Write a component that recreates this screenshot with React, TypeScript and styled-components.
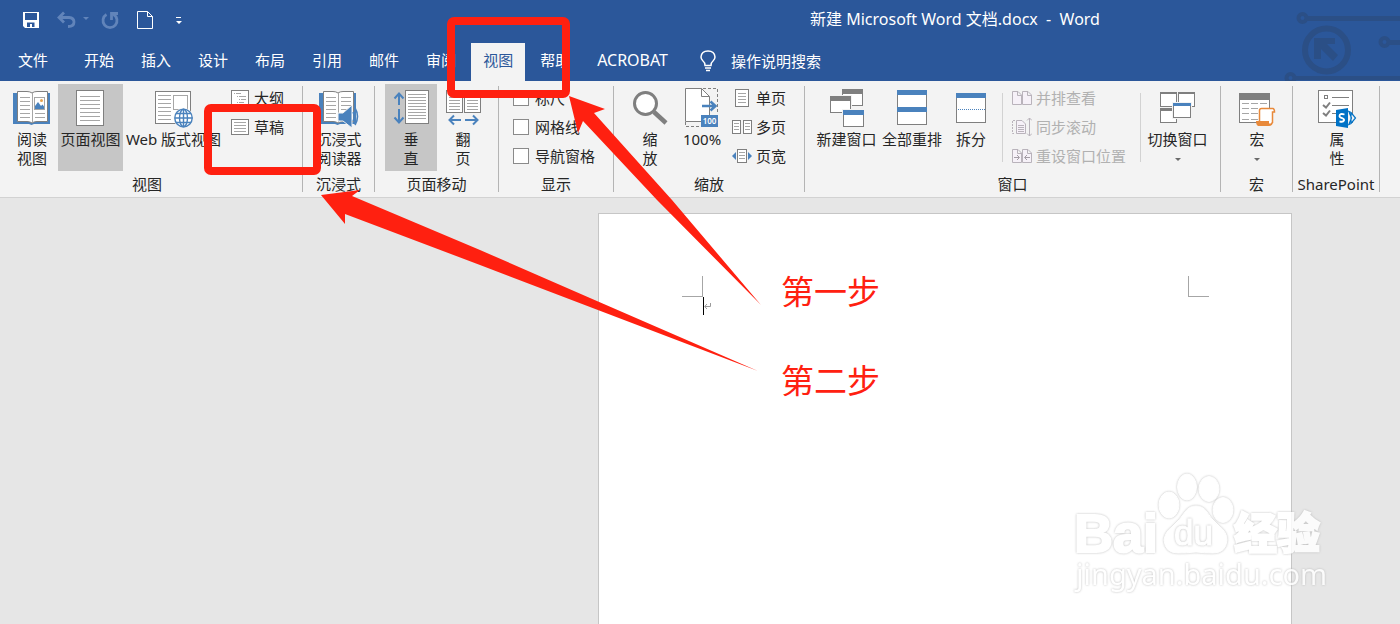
import React from 'react';
import styled, { createGlobalStyle } from 'styled-components';

const GlobalStyle = createGlobalStyle`
  * { box-sizing: border-box; }
  body {
    margin: 0;
    background: #e6e6e6;
    font-family: 'Noto Sans', 'Noto Sans CJK SC', sans-serif;
    font-size: 15px;
    color: #262626;
  }
  button {
    font: inherit;
    color: inherit;
    background: none;
    border: 0;
    padding: 0;
    white-space: nowrap;
  }
`;

const GREY = '#7f7f7f';
const BLUE = '#4a82bd';
const LINE = '#a6a6a6';
const RED = '#ff2010';

/* ---------- layout ---------- */

const Window = styled.div`
  position: relative;
  display: flex;
  flex-direction: column;
  min-height: 100vh;
  overflow: hidden;
`;

const Header = styled.header`
  position: relative;
  height: 81px;
  background: #2b579a;
  color: #fff;
`;

const Circuit = styled.svg`
  position: absolute;
  right: 0;
  top: 0;
`;

const TitleBar = styled.div`
  display: flex;
  align-items: center;
  height: 38px;
`;

const QuickAccess = styled.div`
  display: flex;
  align-items: center;
  flex: 0 0 510px;
  height: 38px;
  padding: 2px 0 0 22px;
`;

const QuickButton = styled.button<{ $gap: number }>`
  display: flex;
  margin-right: ${(p) => p.$gap}px;
`;

const Title = styled.div`
  flex: 1;
  padding-bottom: 3px;
  font-size: 16px;
  text-align: center;
  white-space: pre;
`;

const TabBar = styled.nav`
  display: flex;
  height: 43px;
  padding: 5px 0 0 6px;
`;

const Tab = styled.button<{ $active?: boolean; $after?: number; $latin?: boolean }>`
  height: 38px;
  padding: 0 12px 5px;
  font-size: ${(p) => (p.$latin ? 16 : 15)}px;
  margin-right: ${(p) => p.$after ?? 3}px;
  background: ${(p) => (p.$active ? '#f3f3f3' : 'transparent')};
  color: ${(p) => (p.$active ? '#2b579a' : '#fff')};
`;

const TellMe = styled.button`
  display: flex;
  align-items: center;
  gap: 15px;
  height: 38px;
  padding: 0 0 3px 17px;
`;

const Ribbon = styled.section`
  display: flex;
  height: 117px;
  background: #f3f3f3;
  border-bottom: 1px solid #d2d2d2;
`;

const Separator = styled.div`
  flex: none;
  width: 1px;
  margin: 5px 0;
  background: #b4b4b4;
`;

const InnerSeparator = styled.div<{ $left: number }>`
  flex: none;
  width: 1px;
  height: 69px;
  margin: 9px 4px 0 ${(p) => p.$left}px;
  background: #d2d2d2;
`;

const GroupBox = styled.div<{ $width: number; $right?: number }>`
  flex: none;
  width: ${(p) => p.$width}px;
  padding: 3px ${(p) => p.$right ?? 0}px 0 0;
`;

const GroupBody = styled.div<{ $left: number }>`
  display: flex;
  height: 87px;
  padding-left: ${(p) => p.$left}px;
`;

const GroupLabel = styled.div`
  height: 26px;
  line-height: 27px;
  text-align: center;
  white-space: nowrap;
`;

const BigButton = styled.button<{ $width: number; $active?: boolean }>`
  display: flex;
  flex-direction: column;
  align-items: center;
  flex: none;
  width: ${(p) => p.$width}px;
  height: 87px;
  padding-top: 4px;
  line-height: 19px;
  background: ${(p) => (p.$active ? '#c6c6c6' : 'transparent')};
`;

const BigLabel = styled.span`
  height: 38px;
  margin-top: 2px;
  white-space: pre;
`;

const Caret = styled.span`
  margin: 9px auto 0;
  display: block;
  width: 0;
  border: 3px solid transparent;
  border-top-color: #6a6a6a;
`;

const SmallColumn = styled.div<{ $left: number }>`
  display: flex;
  flex-direction: column;
  flex: none;
  padding-left: ${(p) => p.$left}px;
`;

const SmallButton = styled.button`
  display: flex;
  align-items: center;
  gap: 4px;
  height: 29px;
  line-height: 28px;
  padding-bottom: 1px;
  &:disabled { color: #b1b1b1; }
`;

const CheckLabel = styled.label`
  display: flex;
  align-items: center;
  gap: 6px;
  height: 29px;
  line-height: 28px;
  padding-bottom: 1px;
  white-space: nowrap;
`;

const CheckBox = styled.input`
  appearance: none;
  width: 16px;
  height: 16px;
  margin: 0;
  border: 1px solid #8a8a8a;
  background: #fff;
`;

const Workspace = styled.main`
  position: relative;
  display: flex;
  flex: 1;
  padding: 15px 108px 0 598px;
`;

const Paper = styled.article`
  flex: 1;
  padding: 62px 82px 0 83px;
  background: #fff;
  border: 1px solid #c6c6c6;
  border-bottom: 0;
`;

const Marks = styled.div`
  display: flex;
  justify-content: space-between;
`;

const CornerMark = styled.div<{ $side: 'left' | 'right' }>`
  width: 21px;
  height: 21px;
  border-bottom: 1px solid #a6a6a6;
  border-${(p) => (p.$side === 'left' ? 'right' : 'left')}: 1px solid #a6a6a6;
`;

const Paragraph = styled.div`
  display: flex;
  align-items: center;
  height: 18px;
  margin-left: 21px;
`;

const TextCursor = styled.span`
  width: 1px;
  height: 18px;
  background: #000;
`;

const Watermark = styled.svg`
  position: absolute;
  right: 70px;
  bottom: 24px;
  pointer-events: none;
`;

const Halo = styled.g`
  filter: drop-shadow(0 0 1px #b4b4b4);
`;

const Annotations = styled.svg`
  position: absolute;
  left: 0;
  top: 0;
  pointer-events: none;
`;

const StepNote = styled.div<{ $top: number }>`
  position: absolute;
  left: 781px;
  top: ${(p) => p.$top}px;
  font-size: 33px;
  line-height: 40px;
  color: ${RED};
`;

/* ---------- icon helpers ---------- */

const Svg = ({ w, h = 40, children }: { w: number; h?: number; children: React.ReactNode }) => (
  <svg width={w} height={h} viewBox={`0 0 ${w} ${h}`} fill="none" aria-hidden="true">
    {children}
  </svg>
);

const Lines = ({ x1, x2, ys, c = LINE }: { x1: number; x2: number; ys: number[]; c?: string }) => (
  <path d={ys.map((y) => `M${x1} ${y + 0.5}H${x2}`).join('')} stroke={c} />
);

const Sheet = ({ x, y, w, h, c = GREY }: { x: number; y: number; w: number; h: number; c?: string }) => (
  <rect x={x + 0.5} y={y + 0.5} width={w - 1} height={h - 1} fill="#fff" stroke={c} />
);

const Pane = ({ x, y, w, h, bar, c = GREY }: { x: number; y: number; w: number; h: number; bar: number; c?: string }) => (
  <>
    <rect x={x - 1} y={y - 1} width={w + 2} height={h + 2} fill="#f3f3f3" />
    <Sheet x={x} y={y} w={w} h={h} />
    <rect x={x} y={y} width={w} height={bar} fill={c} />
  </>
);

const Book = () => (
  <>
    <path d="M0 5H5V32H33V5H37V36H21L18.500 37L16 36H0Z" fill={BLUE} />
    <path d="M4.500 3.500H14Q17 3.500 19 5Q21 3.500 24 3.500H34.500V33.500H24Q21 33.500 19 35Q17 33.500 14 33.500H4.500Z" fill="#fff" stroke={GREY} />
    <path d="M19.500 5V34" stroke={LINE} />
    <Lines x1={7} x2={17} ys={[9, 13, 17, 21, 25, 29]} />
  </>
);

/* ---------- ribbon icons ---------- */

const ReadIcon = () => (
  <Svg w={38}>
    <Book />
    <rect x="21.500" y="9.500" width="10" height="12" fill="#fff" stroke={LINE} />
    <path d="M22 21V18L25 14L28 18L29.500 16.500L31 18.500V21Z" fill={BLUE} />
    <circle cx="28.500" cy="12.500" r="1.500" fill="#e8a24c" />
    <Lines x1={22} x2={32} ys={[25, 29]} />
  </Svg>
);

const PageIcon = () => (
  <Svg w={29}>
    <Sheet x={0} y={2} w={28} h={36} />
    <Lines x1={4} x2={24} ys={[8, 12, 16, 20, 24, 28, 32]} />
  </Svg>
);

const WebIcon = () => (
  <Svg w={38}>
    <Sheet x={0} y={3} w={36} h={33} />
    <Lines x1={3} x2={16} ys={[7, 11, 15, 19, 23, 27, 31]} />
    <Sheet x={18} y={7} w={15} h={15} c={LINE} />
    <circle cx="28.500" cy="30" r="10" fill="#f3f3f3" />
    <g stroke={BLUE} strokeWidth="1.400">
      <circle cx="28.500" cy="30" r="8.700" fill="#fff" />
      <ellipse cx="28.500" cy="30" rx="4" ry="8.700" />
      <path d="M20 30H37.500M28.500 21V39M21 25.500H36M21 34.500H36" />
    </g>
  </Svg>
);

const ImmersiveIcon = () => (
  <Svg w={40}>
    <Book />
    <Lines x1={22} x2={32} ys={[9, 13, 17, 21]} />
    <path d="M19 25H24L33 17V40L24 33H19Z" fill={BLUE} stroke="#f3f3f3" />
    <path d="M34 24Q36.500 28.500 34 33M36 20Q41 28.500 36 37" stroke={BLUE} strokeWidth="1.600" />
  </Svg>
);

const VerticalIcon = () => (
  <Svg w={37}>
    <path d="M6 17V6M1.500 10.500L6 5.500L10.500 10.500M6 21V34M1.500 29.500L6 34.500L10.500 29.500" stroke={BLUE} strokeWidth="2" />
    <Sheet x={12} y={2} w={24} h={34} />
    <Lines x1={15} x2={33} ys={[6, 9, 12, 15, 18, 21, 24, 27, 30]} />
  </Svg>
);

const FlipIcon = () => (
  <Svg w={35}>
    <Sheet x={0} y={2} w={17} h={23} />
    <Sheet x={18} y={2} w={17} h={23} />
    <Lines x1={3} x2={14} ys={[6, 9, 12, 15, 18, 21]} />
    <Lines x1={21} x2={32} ys={[6, 9, 12, 15, 18, 21]} />
    <path d="M15 32H4M8 27.500L3.500 32L8 36.500M19 32H31M27 27.500L31.500 32L27 36.500" stroke={BLUE} strokeWidth="2" />
  </Svg>
);

const ZoomIcon = () => (
  <Svg w={36}>
    <path d="M22 24L34 35" stroke={GREY} strokeWidth="4.500" />
    <circle cx="13.500" cy="15.500" r="11" fill="#fff" stroke={GREY} strokeWidth="3" />
  </Svg>
);

const HundredIcon = () => (
  <Svg w={34}>
    <path d="M18 .5H32.500V26M.5 34V38.500H16" stroke={GREY} strokeDasharray="3 2" />
    <path d="M.5 .5H16.500L24.500 8.500V33.500H.5Z" fill="#fff" stroke={GREY} />
    <path d="M16.500 .5V8.500H24.500" stroke={GREY} />
    <path d="M17 18H30M25.500 13.500L30.500 18L25.500 22.500" stroke={BLUE} strokeWidth="2.500" />
    <rect x="16" y="27" width="17" height="12" fill={BLUE} />
    <text x="24.500" y="36" textAnchor="middle" fontSize="8" fontWeight="600" fill="#fff">100</text>
  </Svg>
);

const NewWindowIcon = () => (
  <Svg w={34}>
    <Pane x={12} y={1} w={21} h={17} bar={5} />
    <Pane x={0} y={8} w={21} h={17} bar={5} />
    <Pane x={13} y={22} w={21} h={17} bar={5} c={BLUE} />
  </Svg>
);

const ArrangeIcon = () => (
  <Svg w={30}>
    <Sheet x={0} y={2} w={30} h={35} />
    <path d="M0 2H30V7H0ZM0 19H30V24H0Z" fill={BLUE} />
  </Svg>
);

const SplitIcon = () => (
  <Svg w={30}>
    <Sheet x={0} y={5} w={30} h={30} />
    <path d="M0 5H30V10H0Z" fill={BLUE} />
    <path d="M2 21.500H29" stroke={BLUE} strokeDasharray="1 1" />
  </Svg>
);

const SwitchIcon = () => (
  <Svg w={35}>
    <Pane x={0} y={4} w={17} h={15} bar={2} />
    <Pane x={18} y={4} w={17} h={15} bar={2} />
    <Pane x={0} y={20} w={17} h={15} bar={3} />
    <Pane x={13} y={15} w={18} h={15} bar={3} c={BLUE} />
  </Svg>
);

const MacroIcon = () => (
  <Svg w={37}>
    <Sheet x={0} y={5} w={31} h={30} />
    <rect y="5" width="31" height="7" fill={GREY} />
    <path d="M3 15.500H28M3 20.500H28M3 25.500H28M3 31.500H28" stroke={LINE} strokeDasharray="7 2" />
    <path d="M21 21H34V33L31 38H18V33H21Z" fill="#fff" />
    <path d="M20.500 33V22.500Q20.500 20.500 22.500 20.500H34Q35.500 21 35.500 24H33.500V35" fill="#fff" stroke="#e8893a" strokeWidth="1.500" />
    <path d="M17 33H30V35Q31 37 33 34L34 35Q33 38 30 38H19Q17 37 17 33Z" fill="#e8893a" />
  </Svg>
);

const PropertiesIcon = () => (
  <Svg w={39}>
    <Sheet x={0} y={2} w={35} h={33} />
    <rect x="6.500" y="7.500" width="3" height="3" stroke={GREY} />
    <path d="M14 9.500H31M14 17.500H31M14 25.500H18" stroke={GREY} />
    <path d="M5 17L8 19.500L12 14.500M5 25L8 27.500L12 22.500" stroke={GREY} strokeWidth="2" />
    <path d="M29 21L38 30L29 39Z" fill="#f3f3f3" />
    <path d="M30 23L33 24.500L37.500 30L33 35.500L30 37M31 24L33.500 30L31 36M33 25V35" stroke="#0072c6" strokeWidth="1.200" />
    <path d="M18 22L30 20V40L18 38Z" fill="#0072c6" />
    <path d="M26.500 26.500Q21.500 25 21.500 28Q21.500 29.500 24 30Q26.500 31 26 32.500Q25 34.500 21.500 33.300" stroke="#fff" strokeWidth="1.800" />
  </Svg>
);

const OutlineIcon = () => (
  <Svg w={19} h={18}>
    <Sheet x={0} y={1} w={18} h={16} />
    <path d="M3 4.500H4M5 4.500H10M6 7.500H7M8 7.500H15M8 10.500H9M10 10.500H15M6 13.500H7M8 13.500H13" stroke={LINE} />
  </Svg>
);

const DraftIcon = () => (
  <Svg w={19} h={18}>
    <Sheet x={0} y={1} w={18} h={16} />
    <Lines x1={3} x2={15} ys={[4, 7, 10, 13]} />
  </Svg>
);

const OnePageIcon = () => (
  <Svg w={20} h={20}>
    <Sheet x={3} y={1} w={14} h={18} />
    <Lines x1={6} x2={14} ys={[5, 8, 11, 14]} />
  </Svg>
);

const MultiPageIcon = () => (
  <Svg w={20} h={20}>
    <Sheet x={0} y={3} w={9} h={14} />
    <Sheet x={11} y={3} w={9} h={14} />
    <Lines x1={2} x2={7} ys={[6, 9, 12]} />
    <Lines x1={13} x2={18} ys={[6, 9, 12]} />
  </Svg>
);

const PageWidthIcon = () => (
  <Svg w={20} h={20}>
    <Sheet x={5} y={3} w={10} h={14} />
    <Lines x1={7} x2={13} ys={[6, 9, 12]} />
    <path d="M4 6V14L0 10ZM16 6V14L20 10Z" fill={BLUE} />
  </Svg>
);

const PALE = '#b9b3bb';
const foldPage = (x: number) => `M${x + 0.5} 3.500H${x + 6}L${x + 9.5} 7V16.500H${x + 0.5}ZM${x + 5.5} 3.500V7.500H${x + 9}`;

const SideBySideIcon = () => (
  <Svg w={20} h={20}>
    <path d={foldPage(0) + foldPage(10)} fill="#f6f1f8" stroke={PALE} />
  </Svg>
);

const SyncIcon = () => (
  <Svg w={20} h={20}>
    <path d="M3 3.500H.5V16.500H3" stroke={PALE} strokeDasharray="2 1" />
    <path d="M4.500 3.500H10L13.500 7V16.500H4.500Z" fill="#f6f1f8" stroke={PALE} />
    <Lines x1={6} x2={12} ys={[8, 10, 12, 14]} c={PALE} />
    <path d="M17.500 1V19M15 3.500L17.500 1L20 3.500M15 16.500L17.500 19L20 16.500" stroke={PALE} />
  </Svg>
);

const ResetIcon = () => (
  <Svg w={20} h={20}>
    <path d={foldPage(0) + foldPage(10)} fill="#f6f1f8" stroke={PALE} />
    <path d="M2 11.500H7M5 9L7.500 11.500L5 14M18 11.500H13M15 9L12.500 11.500L15 14" stroke="#a49da6" />
  </Svg>
);

/* ---------- title bar icons ---------- */

const DIM = '#6184ba';

const SaveIcon = () => (
  <Svg w={18} h={18}>
    <path d="M1 1H17V17H3L1 15ZM3 2V9H15V2ZM5 11.500V16H8V13H10V16H12.500V11.500Z" fill="#fff" fillRule="evenodd" />
  </Svg>
);

const UndoIcon = () => (
  <Svg w={32} h={18}>
    <path d="M7 1.500L2 6.500L7 11.500M2.500 6.500H12Q17 7 17 11Q17 15.500 11 15.500" stroke={DIM} strokeWidth="2.800" />
    <path d="M26 6H32L29 9Z" fill={DIM} />
  </Svg>
);

const RedoIcon = () => (
  <Svg w={18} h={18}>
    <path d="M5.500 3.500A7 7 0 1 0 12.500 3.500M10.500 9V2.500H17" stroke={DIM} strokeWidth="2.800" />
  </Svg>
);

const NewDocIcon = () => (
  <Svg w={16} h={20}>
    <path d="M.5 1.500H10.500L15.500 6.500V18.500H.5ZM10.500 1.500V6.500H15.500" stroke="#fff" />
  </Svg>
);

const CustomizeIcon = () => (
  <Svg w={6} h={8}>
    <path d="M0 1H5V2H0ZM0 5H6L3 8Z" fill="#fff" />
  </Svg>
);

const BulbIcon = () => (
  <Svg w={16} h={22}>
    <path d="M5 15.500Q5 12.500 3 11Q1 9 1 7Q1.500 1 8 1Q14.500 1 15 7Q15 9 13 11Q11 12.500 11 15.500Z" stroke="#fff" strokeWidth="1.500" />
    <path d="M5 18H11M6 20.500H10" stroke="#fff" strokeWidth="1.500" />
  </Svg>
);

/* ---------- components ---------- */

type GroupProps = { label: string; width: number; left?: number; right?: number; children: React.ReactNode };

const Group = ({ label, width, left = 0, right, children }: GroupProps) => (
  <>
    <GroupBox $width={width} $right={right}>
      <GroupBody $left={left}>{children}</GroupBody>
      <GroupLabel>{label}</GroupLabel>
    </GroupBox>
    <Separator />
  </>
);

type BigProps = { icon: React.ReactNode; text: string; width?: number; active?: boolean; caret?: boolean };

const Big = ({ icon, text, width = 52, active, caret }: BigProps) => (
  <BigButton $width={width} $active={active}>
    {icon}
    <BigLabel>
      {text}
      {caret && <Caret />}
    </BigLabel>
  </BigButton>
);

const Small = ({ icon, text, disabled }: { icon: React.ReactNode; text: string; disabled?: boolean }) => (
  <SmallButton disabled={disabled}>
    {icon}
    {text}
  </SmallButton>
);

const Check = ({ text }: { text: string }) => (
  <CheckLabel>
    <CheckBox type="checkbox" />
    {text}
  </CheckLabel>
);

export default function App() {
  return (
    <Window>
      <GlobalStyle />
      <Header>
        <Circuit width="120" height="81" viewBox="0 0 120 81" fill="none" stroke="#2b4f86" aria-hidden="true">
          <circle cx="22.500" cy="18" r="4" strokeWidth="4" />
          <path d="M27 18.500H120" strokeWidth="5" />
          <circle cx="46.500" cy="50" r="21.500" strokeWidth="6" />
          <path d="M34 38H55V44H47L58 55L53 61L41 49V59H34Z" fill="#2b4f86" stroke="none" />
          <circle cx="104.500" cy="42" r="4" strokeWidth="4" />
          <path d="M109 42.500H120" strokeWidth="5" />
          <circle cx="10.500" cy="78" r="4" strokeWidth="4" />
          <path d="M15 78H120" strokeWidth="4" />
        </Circuit>
        <TitleBar>
          <QuickAccess>
            <QuickButton $gap={17} aria-label="保存"><SaveIcon /></QuickButton>
            <QuickButton $gap={12} aria-label="撤消"><UndoIcon /></QuickButton>
            <QuickButton $gap={18} aria-label="重复"><RedoIcon /></QuickButton>
            <QuickButton $gap={23} aria-label="新建"><NewDocIcon /></QuickButton>
            <QuickButton $gap={0} aria-label="自定义"><CustomizeIcon /></QuickButton>
          </QuickAccess>
          <Title>{'新建 Microsoft Word 文档.docx  -  Word'}</Title>
        </TitleBar>
        <TabBar>
          <Tab $after={12}>文件</Tab>
          <Tab>开始</Tab>
          <Tab>插入</Tab>
          <Tab>设计</Tab>
          <Tab>布局</Tab>
          <Tab>引用</Tab>
          <Tab>邮件</Tab>
          <Tab>审阅</Tab>
          <Tab $active>视图</Tab>
          <Tab>帮助</Tab>
          <Tab $latin>ACROBAT</Tab>
          <TellMe><BulbIcon />操作说明搜索</TellMe>
        </TabBar>
      </Header>

      <Ribbon>
        <Group label="视图" width={302} left={6} right={8}>
          <Big icon={<ReadIcon />} text={'阅读\n视图'} />
          <Big icon={<PageIcon />} text="页面视图" width={65} active />
          <Big icon={<WebIcon />} text="Web 版式视图" width={101} />
          <SmallColumn $left={7}>
            <Small icon={<OutlineIcon />} text="大纲" />
            <Small icon={<DraftIcon />} text="草稿" />
          </SmallColumn>
        </Group>
        <Group label="沉浸式" width={71} left={10}>
          <Big icon={<ImmersiveIcon />} text={'沉浸式\n阅读器'} />
        </Group>
        <Group label="页面移动" width={123} left={10}>
          <Big icon={<VerticalIcon />} text={'垂\n直'} active />
          <Big icon={<FlipIcon />} text={'翻\n页'} />
        </Group>
        <Group label="显示" width={114} left={14}>
          <SmallColumn $left={0}>
            <Check text="标尺" />
            <Check text="网格线" />
            <Check text="导航窗格" />
          </SmallColumn>
        </Group>
        <Group label="缩放" width={190} left={10}>
          <Big icon={<ZoomIcon />} text={'缩\n放'} />
          <Big icon={<HundredIcon />} text="100%" />
          <SmallColumn $left={4}>
            <Small icon={<OnePageIcon />} text="单页" />
            <Small icon={<MultiPageIcon />} text="多页" />
            <Small icon={<PageWidthIcon />} text="页宽" />
          </SmallColumn>
        </Group>
        <Group label="窗口" width={415} left={9}>
          <Big icon={<NewWindowIcon />} text="新建窗口" width={65} />
          <Big icon={<ArrangeIcon />} text="全部重排" width={66} />
          <Big icon={<SplitIcon />} text="拆分" />
          <InnerSeparator $left={5} />
          <SmallColumn $left={5}>
            <Small icon={<SideBySideIcon />} text="并排查看" disabled />
            <Small icon={<SyncIcon />} text="同步滚动" disabled />
            <Small icon={<ResetIcon />} text="重设窗口位置" disabled />
          </SmallColumn>
          <InnerSeparator $left={14} />
          <Big icon={<SwitchIcon />} text="切换窗口" width={65} caret />
        </Group>
        <Group label="宏" width={71} left={10}>
          <Big icon={<MacroIcon />} text="宏" caret />
        </Group>
        <Group label="SharePoint" width={86} left={18}>
          <Big icon={<PropertiesIcon />} text={'属\n性'} />
        </Group>
      </Ribbon>

      <Workspace>
        <Paper>
          <Marks>
            <CornerMark $side="left" />
            <CornerMark $side="right" />
          </Marks>
          <Paragraph>
            <TextCursor />
            <svg width="7" height="8" viewBox="0 0 7 8" fill="none" stroke="#9a9a9a" aria-hidden="true">
              <path d="M6.500 1V4.500H1M3 2L.7 4.500L3 7" />
            </svg>
          </Paragraph>
        </Paper>
        <Watermark width="260" height="130" viewBox="0 0 260 130" fill="#fff" stroke="#fff" opacity="0.85">
          <Halo>
            <g fontWeight="bold" strokeWidth="2">
              <text x="4" y="82" fontSize="54" fontFamily="Liberation Sans, sans-serif">Bai</text>
              <text x="164" y="79" fontSize="43" fontWeight="900" fontFamily="Noto Sans CJK SC, sans-serif">经验</text>
            </g>
            <ellipse cx="99" cy="35" rx="10" ry="13" />
            <ellipse cx="117" cy="17" rx="9.500" ry="13" />
            <ellipse cx="139" cy="19" rx="10" ry="12.500" />
            <ellipse cx="153" cy="40" rx="10" ry="12.500" />
            <path d="M126 36Q133 36 137 42Q141 49 149 56Q157 62 157 70Q156 83 143 83Q135 83 126 82Q116 83 108 83Q95 83 94 70Q95 62 102 57Q110 50 115 42Q119 36 126 36Z" />
            <text x="6" y="115" fontSize="29" stroke="none" fontFamily="Noto Sans, sans-serif">jingyan.baidu.com</text>
          </Halo>
          <Halo>
            <text x="104" y="75" fontSize="35" fontFamily="Liberation Sans, sans-serif">du</text>
          </Halo>
        </Watermark>
      </Workspace>

      <Annotations width="800" height="400" viewBox="0 0 800 400" fill={RED} aria-hidden="true">
        <rect x="451" y="21" width="115" height="73" rx="3" fill="none" stroke={RED} strokeWidth="8" />
        <rect x="208" y="108" width="109" height="63" rx="3" fill="none" stroke={RED} strokeWidth="8" />
        <path d="M569 96L605 109L594 113L672 200L761 305L657 200L583 121L578 133Z" />
        <path d="M321 195L360 190L352 196L480 250L590 298L758 371L590 307L480 265L345 214V224Z" />
      </Annotations>
      <StepNote $top={272}>第一步</StepNote>
      <StepNote $top={361}>第二步</StepNote>
    </Window>
  );
}
